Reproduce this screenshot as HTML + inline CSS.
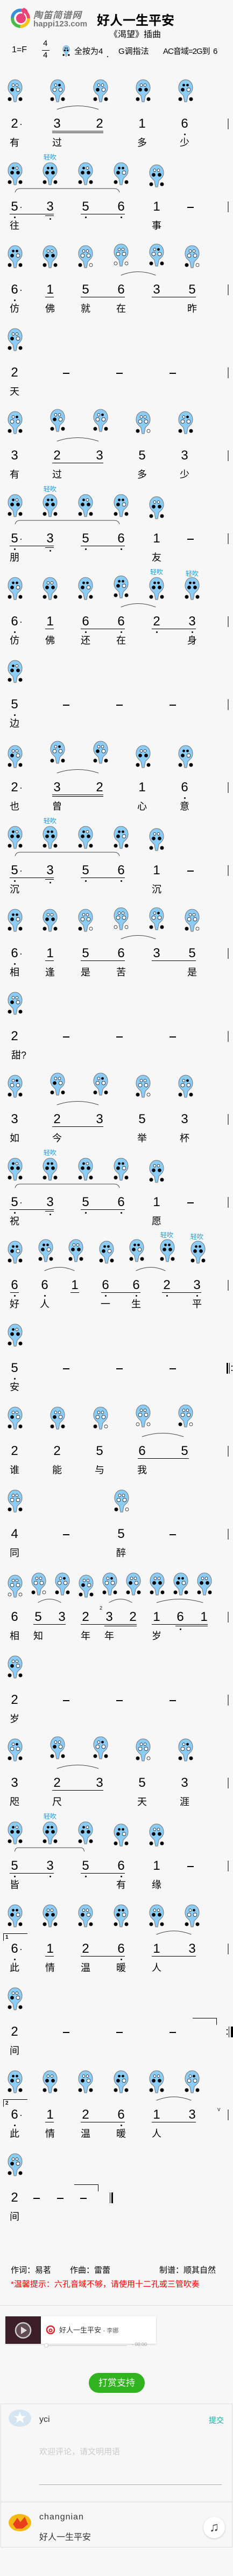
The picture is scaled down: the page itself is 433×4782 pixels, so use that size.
<!DOCTYPE html>
<html><head><meta charset="utf-8">
<style>
*{margin:0;padding:0;box-sizing:border-box}
body{width:433px;height:4782px;background:#f7f7f7;position:relative;overflow:hidden;font-family:"Liberation Sans","Noto Sans CJK SC",sans-serif;color:#000}
.s{position:absolute;left:0;width:433px;height:150px}
.o{position:absolute;top:17px;width:28px;height:43px}
.n{position:absolute;top:86px;width:20px;margin-left:-10px;text-align:center;font-size:24px;line-height:28px}
.l{position:absolute;top:123px;width:24px;margin-left:-12px;text-align:center;font-size:18px;line-height:24px;white-space:nowrap}
.q{position:absolute;top:1px;width:40px;margin-left:-20px;text-align:center;font-size:12px;color:#1e9be0;line-height:14px}
.u,.u2{position:absolute;height:1px;background:#000}
.u{top:113px}.u2{top:116px}
.d{position:absolute;top:118px;width:3px;height:3px;margin-left:-1.5px;border-radius:50%;background:#000}
.d.dd{top:121px}
.a{position:absolute;top:100px;width:2px;height:2px;background:#000;border-radius:50%}
.m{position:absolute;top:100px;width:12px;height:2px;margin-left:-6px;background:#000}
.bar{position:absolute;left:423px;top:90px;width:2px;height:20px;background:#777}
.sl{position:absolute;top:64px;height:10px;overflow:visible}
.sl path{fill:none;stroke:#444;stroke-width:1;vector-effect:non-scaling-stroke}
.abs{position:absolute;white-space:nowrap}
</style></head><body>
<svg width="0" height="0" style="position:absolute">
<defs>
<path id="B" d="M14 1C22 1 27 8 27 16C27 24 21 27 18 31L16 42L12 42L10 31C7 27 1 24 1 16C1 8 6 1 14 1Z" fill="#8ccdf7" stroke="#777" stroke-width="1"/>
<symbol id="m1" viewBox="0 0 28 43"><use href="#B"/><circle cx="10.5" cy="11" r="2.4" fill="#fff" stroke="#000" stroke-width=".7"/><circle cx="17.5" cy="11" r="2.4" fill="#fff" stroke="#000" stroke-width=".7"/><circle cx="8.5" cy="19.5" r="3.4" fill="#000"/><circle cx="19.5" cy="19.5" r="3.4" fill="#000"/><circle cx="4" cy="37" r="3.5" fill="#000"/><circle cx="24" cy="37" r="3.5" fill="#000"/></symbol>
<symbol id="m2" viewBox="0 0 28 43"><use href="#B"/><circle cx="10.5" cy="11" r="2.4" fill="#fff" stroke="#000" stroke-width=".7"/><circle cx="17.5" cy="11" r="2.4" fill="#fff" stroke="#000" stroke-width=".7"/><circle cx="8.5" cy="19.5" r="3.4" fill="#000"/><circle cx="19.5" cy="19.5" r="3.4" fill="#fff" stroke="#000" stroke-width=".7"/><circle cx="4" cy="37" r="3.5" fill="#000"/><circle cx="24" cy="37" r="3.5" fill="#000"/></symbol>
<symbol id="m3" viewBox="0 0 28 43"><use href="#B"/><circle cx="10.5" cy="11" r="2.4" fill="#fff" stroke="#000" stroke-width=".7"/><circle cx="17.5" cy="11" r="2.4" fill="#000"/><circle cx="8.5" cy="19.5" r="3.4" fill="#fff" stroke="#000" stroke-width=".7"/><circle cx="19.5" cy="19.5" r="3.4" fill="#fff" stroke="#000" stroke-width=".7"/><circle cx="4" cy="37" r="3.5" fill="#000"/><circle cx="24" cy="37" r="3.5" fill="#000"/></symbol>
<symbol id="m4" viewBox="0 0 28 43"><use href="#B"/><circle cx="10.5" cy="11" r="2.4" fill="#fff" stroke="#000" stroke-width=".7"/><circle cx="17.5" cy="11" r="2.4" fill="#fff" stroke="#000" stroke-width=".7"/><circle cx="8.5" cy="19.5" r="3.4" fill="#fff" stroke="#000" stroke-width=".7"/><circle cx="19.5" cy="19.5" r="3.4" fill="#fff" stroke="#000" stroke-width=".7"/><circle cx="4" cy="37" r="3.5" fill="#000"/><circle cx="24" cy="37" r="3.5" fill="#000"/></symbol>
<symbol id="m5" viewBox="0 0 28 43"><use href="#B"/><circle cx="10.5" cy="11" r="2.4" fill="#fff" stroke="#000" stroke-width=".7"/><circle cx="17.5" cy="11" r="2.4" fill="#fff" stroke="#000" stroke-width=".7"/><circle cx="8.5" cy="19.5" r="3.4" fill="#fff" stroke="#000" stroke-width=".7"/><circle cx="19.5" cy="19.5" r="3.4" fill="#fff" stroke="#000" stroke-width=".7"/><circle cx="4" cy="37" r="3.5" fill="#000"/><circle cx="24" cy="37" r="3" fill="#fff" stroke="#000" stroke-width=".7"/></symbol>
<symbol id="m6" viewBox="0 0 28 43"><use href="#B"/><circle cx="10.5" cy="11" r="2.4" fill="#fff" stroke="#000" stroke-width=".7"/><circle cx="17.5" cy="11" r="2.4" fill="#fff" stroke="#000" stroke-width=".7"/><circle cx="8.5" cy="19.5" r="3.4" fill="#fff" stroke="#000" stroke-width=".7"/><circle cx="19.5" cy="19.5" r="3.4" fill="#fff" stroke="#000" stroke-width=".7"/><circle cx="4" cy="37" r="3" fill="#fff" stroke="#000" stroke-width=".7"/><circle cx="24" cy="37" r="3" fill="#fff" stroke="#000" stroke-width=".7"/></symbol>
<symbol id="l5" viewBox="0 0 28 43"><use href="#B"/><circle cx="10.5" cy="11" r="2.4" fill="#000"/><circle cx="17.5" cy="11" r="2.4" fill="#fff" stroke="#000" stroke-width=".7"/><circle cx="8.5" cy="19.5" r="3.4" fill="#000"/><circle cx="19.5" cy="19.5" r="3.4" fill="#000"/><circle cx="4" cy="37" r="3.5" fill="#000"/><circle cx="24" cy="37" r="3.5" fill="#000"/></symbol>
<symbol id="l6" viewBox="0 0 28 43"><use href="#B"/><circle cx="10.5" cy="11" r="2.4" fill="#000"/><circle cx="17.5" cy="11" r="2.4" fill="#000"/><circle cx="8.5" cy="19.5" r="3.4" fill="#000"/><circle cx="19.5" cy="19.5" r="3.4" fill="#fff" stroke="#000" stroke-width=".7"/><circle cx="4" cy="37" r="3.5" fill="#000"/><circle cx="24" cy="37" r="3.5" fill="#000"/></symbol>
<symbol id="l3" viewBox="0 0 28 43"><use href="#B"/><circle cx="10.5" cy="11" r="2.4" fill="#000"/><circle cx="17.5" cy="11" r="2.4" fill="#000"/><circle cx="8.5" cy="19.5" r="3.4" fill="#000"/><circle cx="19.5" cy="19.5" r="3.4" fill="#000"/><circle cx="4" cy="37" r="3.5" fill="#000"/><circle cx="24" cy="37" r="3.5" fill="#000"/></symbol>
</defs></svg>

<!-- Header -->
<svg class="abs" style="left:18px;top:12px" width="40" height="40" viewBox="0 0 40 40">
<circle cx="20" cy="22" r="15" fill="none" stroke="#f5c518" stroke-width="6" stroke-dasharray="24 100"/>
<circle cx="20" cy="22" r="15" fill="none" stroke="#4cb848" stroke-width="6" stroke-dasharray="0 24 24 100"/>
<circle cx="20" cy="22" r="15" fill="none" stroke="#3a8fd6" stroke-width="6" stroke-dasharray="0 48 24 100"/>
<circle cx="20" cy="22" r="15" fill="none" stroke="#e94b6b" stroke-width="6" stroke-dasharray="0 72 24 100"/>
<circle cx="21" cy="22" r="9" fill="#e9407a"/>
<path d="M25 4L25 18M25 4Q33 6 32 13" stroke="#e9407a" stroke-width="3" fill="none"/>
</svg>
<div class="abs" style="left:62px;top:14px;font-size:17px;font-style:italic;font-weight:bold;color:#777;letter-spacing:1px">陶笛简谱网</div>
<div class="abs" style="left:62px;top:36px;font-size:15px;font-weight:bold;color:#777">happi123.com</div>
<div class="abs" style="left:180px;top:18px;font-size:24px;font-weight:bold">好人一生平安</div>
<div class="abs" style="left:203px;top:50px;font-size:16px">《渴望》插曲</div>
<div class="abs" style="left:22px;top:84px;font-size:16px">1=F</div>
<div class="abs" style="left:80px;top:73px;font-size:15px;line-height:16px">4</div>
<div class="abs" style="left:78px;top:93px;width:14px;height:1px;background:#000"></div>
<div class="abs" style="left:80px;top:95px;font-size:15px;line-height:16px">4</div>
<svg class="abs" style="left:115px;top:84px" width="16" height="21" viewBox="0 0 28 43"><use href="#l3"/></svg>
<div class="abs" style="left:138px;top:84px;font-size:15px">全按为4</div>
<i class="abs" style="left:199px;top:104px;width:2px;height:2px;background:#000;border-radius:50%"></i>
<div class="abs" style="left:220px;top:84px;font-size:15px">G调指法</div>
<div class="abs" style="left:303px;top:84px;font-size:15px;letter-spacing:-1px">AC音域=2G到&nbsp; 6</div>

<!-- 1 -->
<div class="s" style="top:130px">
<svg class="o" style="left:14px"><use href="#m2"/></svg><svg class="o" style="left:93px"><use href="#m3"/></svg><svg class="o" style="left:173px"><use href="#m2"/></svg><svg class="o" style="left:252px"><use href="#m1"/></svg><svg class="o" style="left:331px"><use href="#l6"/></svg>
<svg class="sl" style="left:105px;width:79px" viewBox="0 0 100 10" preserveAspectRatio="none"><path d="M1 9Q50-4 99 9"/></svg>
<div class="n" style="left:27px">2</div><i class="a" style="left:38px"></i><div class="n" style="left:106px">3</div><div class="n" style="left:185px">2</div><div class="n" style="left:264px">1</div><div class="n" style="left:343px">6</div><i class="d" style="left:343px"></i>
<b class="u" style="left:97px;width:95px"></b><b class="u2" style="left:97px;width:95px"></b>
<div class="l" style="left:27px">有</div><div class="l" style="left:106px">过</div><div class="l" style="left:264px">多</div><div class="l" style="left:343px">少</div>
<b class="bar"></b></div>

<!-- 2 -->
<div class="s" style="top:284px"><div class="q" style="left:93px">轻吹</div>
<svg class="o" style="left:14px"><use href="#l5"/></svg><svg class="o" style="left:79px"><use href="#l3"/></svg><svg class="o" style="left:145px"><use href="#l5"/></svg><svg class="o" style="left:211px"><use href="#l6"/></svg><svg class="o" style="left:277px;top:21px"><use href="#m1"/></svg>
<svg class="sl" style="left:26px;width:198px" viewBox="0 0 100 10" preserveAspectRatio="none"><path d="M1 9Q2 2 6 2L94 2Q98 2 99 9"/></svg>
<div class="n" style="left:27px">5</div><i class="a" style="left:38px"></i><div class="n" style="left:93px">3</div><div class="n" style="left:159px">5</div><div class="n" style="left:225px">6</div><div class="n" style="left:291px">1</div><b class="m" style="left:354px"></b>
<b class="u" style="left:18px;width:82px"></b><b class="u2" style="left:84px;width:16px"></b><b class="u" style="left:150px;width:82px"></b>
<i class="d" style="left:27px"></i><i class="d dd" style="left:93px"></i><i class="d" style="left:159px"></i><i class="d" style="left:225px"></i>
<div class="l" style="left:27px">往</div><div class="l" style="left:291px">事</div>
<b class="bar"></b></div>

<!-- 3 -->
<div class="s" style="top:438px">
<svg class="o" style="left:14px"><use href="#l6"/></svg><svg class="o" style="left:79px"><use href="#m1"/></svg><svg class="o" style="left:145px"><use href="#m5"/></svg><svg class="o" style="left:211px;top:14px"><use href="#m6"/></svg><svg class="o" style="left:277px;top:14px"><use href="#m3"/></svg><svg class="o" style="left:343px"><use href="#m5"/></svg>
<svg class="sl" style="left:224px;width:66px" viewBox="0 0 100 10" preserveAspectRatio="none"><path d="M1 9Q50-4 99 9"/></svg>
<div class="n" style="left:27px">6</div><i class="a" style="left:38px"></i><div class="n" style="left:93px">1</div><div class="n" style="left:159px">5</div><div class="n" style="left:225px">6</div><div class="n" style="left:291px">3</div><div class="n" style="left:357px">5</div>
<b class="u" style="left:84px;width:16px"></b><b class="u" style="left:150px;width:82px"></b><b class="u" style="left:282px;width:82px"></b>
<i class="d" style="left:27px"></i>
<div class="l" style="left:27px">仿</div><div class="l" style="left:93px">佛</div><div class="l" style="left:159px">就</div><div class="l" style="left:225px">在</div><div class="l" style="left:357px">昨</div>
<b class="bar"></b></div>

<!-- 4 -->
<div class="s" style="top:592px">
<svg class="o" style="left:14px"><use href="#m2"/></svg>
<div class="n" style="left:27px">2</div><b class="m" style="left:123px"></b><b class="m" style="left:222px"></b><b class="m" style="left:321px"></b>
<div class="l" style="left:27px">天</div><b class="bar"></b></div>

<!-- 5 -->
<div class="s" style="top:746px">
<svg class="o" style="left:14px"><use href="#m3"/></svg><svg class="o" style="left:93px;top:13px"><use href="#m2"/></svg><svg class="o" style="left:173px;top:13px"><use href="#m3"/></svg><svg class="o" style="left:252px"><use href="#m5"/></svg><svg class="o" style="left:331px"><use href="#m3"/></svg>
<svg class="sl" style="left:105px;width:79px" viewBox="0 0 100 10" preserveAspectRatio="none"><path d="M1 9Q50-4 99 9"/></svg>
<div class="n" style="left:27px">3</div><div class="n" style="left:106px">2</div><div class="n" style="left:185px">3</div><div class="n" style="left:264px">5</div><div class="n" style="left:343px">3</div>
<b class="u" style="left:97px;width:95px"></b>
<div class="l" style="left:27px">有</div><div class="l" style="left:106px">过</div><div class="l" style="left:264px">多</div><div class="l" style="left:343px">少</div>
<b class="bar"></b></div>

<!-- 6 -->
<div class="s" style="top:900px"><div class="q" style="left:93px">轻吹</div>
<svg class="o" style="left:14px"><use href="#l5"/></svg><svg class="o" style="left:79px"><use href="#l3"/></svg><svg class="o" style="left:145px"><use href="#l5"/></svg><svg class="o" style="left:211px"><use href="#l6"/></svg><svg class="o" style="left:277px;top:21px"><use href="#m1"/></svg>
<svg class="sl" style="left:26px;width:198px" viewBox="0 0 100 10" preserveAspectRatio="none"><path d="M1 9Q2 2 6 2L94 2Q98 2 99 9"/></svg>
<div class="n" style="left:27px">5</div><i class="a" style="left:38px"></i><div class="n" style="left:93px">3</div><div class="n" style="left:159px">5</div><div class="n" style="left:225px">6</div><div class="n" style="left:291px">1</div><b class="m" style="left:354px"></b>
<b class="u" style="left:18px;width:82px"></b><b class="u2" style="left:84px;width:16px"></b><b class="u" style="left:150px;width:82px"></b>
<i class="d" style="left:27px"></i><i class="d dd" style="left:93px"></i><i class="d" style="left:159px"></i><i class="d" style="left:225px"></i>
<div class="l" style="left:27px">朋</div><div class="l" style="left:291px">友</div>
<b class="bar"></b></div>

<!-- 7 -->
<div class="s" style="top:1054px"><div class="q" style="left:291px">轻吹</div><div class="q" style="left:357px;top:4px">轻吹</div>
<svg class="o" style="left:14px"><use href="#l6"/></svg><svg class="o" style="left:79px"><use href="#m1"/></svg><svg class="o" style="left:145px"><use href="#l6"/></svg><svg class="o" style="left:211px;top:14px"><use href="#l6"/></svg><svg class="o" style="left:277px"><use href="#l3"/></svg><svg class="o" style="left:343px"><use href="#l3"/></svg>
<svg class="sl" style="left:224px;width:66px" viewBox="0 0 100 10" preserveAspectRatio="none"><path d="M1 9Q50-4 99 9"/></svg>
<div class="n" style="left:27px">6</div><i class="a" style="left:38px"></i><div class="n" style="left:93px">1</div><div class="n" style="left:159px">6</div><div class="n" style="left:225px">6</div><div class="n" style="left:291px">2</div><div class="n" style="left:357px">3</div>
<b class="u" style="left:84px;width:16px"></b><b class="u" style="left:150px;width:82px"></b><b class="u" style="left:282px;width:82px"></b>
<i class="d" style="left:27px"></i><i class="d" style="left:159px"></i><i class="d" style="left:225px"></i><i class="d" style="left:291px"></i><i class="d" style="left:357px"></i>
<div class="l" style="left:27px">仿</div><div class="l" style="left:93px">佛</div><div class="l" style="left:159px">还</div><div class="l" style="left:225px">在</div><div class="l" style="left:357px">身</div>
<b class="bar"></b></div>

<!-- 8 -->
<div class="s" style="top:1208px">
<svg class="o" style="left:14px"><use href="#l5"/></svg>
<div class="n" style="left:27px">5</div><i class="d" style="left:27px"></i><b class="m" style="left:123px"></b><b class="m" style="left:222px"></b><b class="m" style="left:321px"></b>
<div class="l" style="left:27px">边</div><b class="bar"></b></div>

<!-- 9 -->
<div class="s" style="top:1362px">
<svg class="o" style="left:14px;top:21px"><use href="#m2"/></svg><svg class="o" style="left:93px;top:13px"><use href="#m3"/></svg><svg class="o" style="left:173px;top:13px"><use href="#m2"/></svg><svg class="o" style="left:252px;top:21px"><use href="#m1"/></svg><svg class="o" style="left:331px;top:21px"><use href="#l6"/></svg>
<svg class="sl" style="left:105px;width:79px" viewBox="0 0 100 10" preserveAspectRatio="none"><path d="M1 9Q50-4 99 9"/></svg>
<div class="n" style="left:27px">2</div><i class="a" style="left:38px"></i><div class="n" style="left:106px">3</div><div class="n" style="left:185px">2</div><div class="n" style="left:264px">1</div><div class="n" style="left:343px">6</div><i class="d" style="left:343px"></i>
<b class="u" style="left:97px;width:95px"></b><b class="u2" style="left:97px;width:95px"></b>
<div class="l" style="left:27px">也</div><div class="l" style="left:106px">曾</div><div class="l" style="left:264px">心</div><div class="l" style="left:343px">意</div>
<b class="bar"></b></div>

<!-- 10 -->
<div class="s" style="top:1516px"><div class="q" style="left:93px">轻吹</div>
<svg class="o" style="left:14px"><use href="#l5"/></svg><svg class="o" style="left:79px"><use href="#l3"/></svg><svg class="o" style="left:145px"><use href="#l5"/></svg><svg class="o" style="left:211px"><use href="#l6"/></svg><svg class="o" style="left:277px;top:21px"><use href="#m1"/></svg>
<svg class="sl" style="left:26px;width:198px" viewBox="0 0 100 10" preserveAspectRatio="none"><path d="M1 9Q2 2 6 2L94 2Q98 2 99 9"/></svg>
<div class="n" style="left:27px">5</div><i class="a" style="left:38px"></i><div class="n" style="left:93px">3</div><div class="n" style="left:159px">5</div><div class="n" style="left:225px">6</div><div class="n" style="left:291px">1</div><b class="m" style="left:354px"></b>
<b class="u" style="left:18px;width:82px"></b><b class="u2" style="left:84px;width:16px"></b><b class="u" style="left:150px;width:82px"></b>
<i class="d" style="left:27px"></i><i class="d dd" style="left:93px"></i><i class="d" style="left:159px"></i><i class="d" style="left:225px"></i>
<div class="l" style="left:27px">沉</div><div class="l" style="left:291px">沉</div>
<b class="bar"></b></div>

<!-- 11 -->
<div class="s" style="top:1670px">
<svg class="o" style="left:14px"><use href="#l6"/></svg><svg class="o" style="left:79px"><use href="#m1"/></svg><svg class="o" style="left:145px"><use href="#m5"/></svg><svg class="o" style="left:211px;top:14px"><use href="#m6"/></svg><svg class="o" style="left:277px;top:14px"><use href="#m3"/></svg><svg class="o" style="left:343px"><use href="#m5"/></svg>
<svg class="sl" style="left:224px;width:66px" viewBox="0 0 100 10" preserveAspectRatio="none"><path d="M1 9Q50-4 99 9"/></svg>
<div class="n" style="left:27px">6</div><i class="a" style="left:38px"></i><div class="n" style="left:93px">1</div><div class="n" style="left:159px">5</div><div class="n" style="left:225px">6</div><div class="n" style="left:291px">3</div><div class="n" style="left:357px">5</div>
<b class="u" style="left:84px;width:16px"></b><b class="u" style="left:150px;width:82px"></b><b class="u" style="left:282px;width:82px"></b>
<i class="d" style="left:27px"></i>
<div class="l" style="left:27px">相</div><div class="l" style="left:93px">逢</div><div class="l" style="left:159px">是</div><div class="l" style="left:225px">苦</div><div class="l" style="left:357px">是</div>
<b class="bar"></b></div>

<!-- 12 -->
<div class="s" style="top:1824px">
<svg class="o" style="left:14px"><use href="#m2"/></svg>
<div class="n" style="left:27px">2</div><b class="m" style="left:123px"></b><b class="m" style="left:222px"></b><b class="m" style="left:321px"></b>
<div class="l" style="left:35px;width:40px;margin-left:-20px">甜?</div><b class="bar"></b></div>

<!-- 13 -->
<div class="s" style="top:1978px">
<svg class="o" style="left:14px"><use href="#m3"/></svg><svg class="o" style="left:93px;top:13px"><use href="#m2"/></svg><svg class="o" style="left:173px;top:13px"><use href="#m3"/></svg><svg class="o" style="left:252px"><use href="#m5"/></svg><svg class="o" style="left:331px"><use href="#m3"/></svg>
<svg class="sl" style="left:105px;width:79px" viewBox="0 0 100 10" preserveAspectRatio="none"><path d="M1 9Q50-4 99 9"/></svg>
<div class="n" style="left:27px">3</div><div class="n" style="left:106px">2</div><div class="n" style="left:185px">3</div><div class="n" style="left:264px">5</div><div class="n" style="left:343px">3</div>
<b class="u" style="left:97px;width:95px"></b>
<div class="l" style="left:27px">如</div><div class="l" style="left:106px">今</div><div class="l" style="left:264px">举</div><div class="l" style="left:343px">杯</div>
<b class="bar"></b></div>

<!-- 14 -->
<div class="s" style="top:2132px"><div class="q" style="left:93px">轻吹</div>
<svg class="o" style="left:14px"><use href="#l5"/></svg><svg class="o" style="left:79px"><use href="#l3"/></svg><svg class="o" style="left:145px"><use href="#l5"/></svg><svg class="o" style="left:211px"><use href="#l6"/></svg><svg class="o" style="left:277px;top:21px"><use href="#m1"/></svg>
<svg class="sl" style="left:26px;width:198px" viewBox="0 0 100 10" preserveAspectRatio="none"><path d="M1 9Q2 2 6 2L94 2Q98 2 99 9"/></svg>
<div class="n" style="left:27px">5</div><i class="a" style="left:38px"></i><div class="n" style="left:93px">3</div><div class="n" style="left:159px">5</div><div class="n" style="left:225px">6</div><div class="n" style="left:291px">1</div><b class="m" style="left:354px"></b>
<b class="u" style="left:18px;width:82px"></b><b class="u2" style="left:84px;width:16px"></b><b class="u" style="left:150px;width:82px"></b>
<i class="d" style="left:27px"></i><i class="d dd" style="left:93px"></i><i class="d" style="left:159px"></i><i class="d" style="left:225px"></i>
<div class="l" style="left:27px">祝</div><div class="l" style="left:291px">愿</div>
<b class="bar"></b></div>

<!-- 15 -->
<div class="s" style="top:2286px"><div class="q" style="left:310px;top:0">轻吹</div><div class="q" style="left:366px;top:3px">轻吹</div>
<svg class="o" style="left:14px"><use href="#l6"/></svg><svg class="o" style="left:71px;top:14px"><use href="#l6"/></svg><svg class="o" style="left:127px;top:14px"><use href="#m1"/></svg><svg class="o" style="left:184px"><use href="#l6"/></svg><svg class="o" style="left:240px;top:14px"><use href="#l6"/></svg><svg class="o" style="left:297px;top:14px"><use href="#l3"/></svg><svg class="o" style="left:354px"><use href="#l3"/></svg>
<svg class="sl" style="left:82px;width:57px" viewBox="0 0 100 10" preserveAspectRatio="none"><path d="M1 9Q50-4 99 9"/></svg><svg class="sl" style="left:252px;width:56px" viewBox="0 0 100 10" preserveAspectRatio="none"><path d="M1 9Q50-4 99 9"/></svg>
<div class="n" style="left:27px">6</div><div class="n" style="left:83px">6</div><div class="n" style="left:139px">1</div><div class="n" style="left:196px">6</div><div class="n" style="left:253px">6</div><div class="n" style="left:310px">2</div><div class="n" style="left:366px">3</div>
<b class="u" style="left:19px;width:16px"></b><b class="u" style="left:131px;width:16px"></b><b class="u" style="left:188px;width:73px"></b><b class="u" style="left:301px;width:73px"></b>
<i class="d" style="left:27px"></i><i class="d" style="left:83px"></i><i class="d" style="left:196px"></i><i class="d" style="left:253px"></i><i class="d" style="left:310px"></i><i class="d" style="left:366px"></i>
<div class="l" style="left:27px">好</div><div class="l" style="left:83px">人</div><div class="l" style="left:196px">一</div><div class="l" style="left:253px">生</div><div class="l" style="left:366px">平</div>
<b class="bar"></b></div>

<!-- 16 -->
<div class="s" style="top:2440px">
<svg class="o" style="left:14px"><use href="#l5"/></svg>
<div class="n" style="left:27px">5</div><i class="d" style="left:27px"></i><b class="m" style="left:123px"></b><b class="m" style="left:222px"></b><b class="m" style="left:321px"></b>
<div class="l" style="left:27px">安</div>
<b style="position:absolute;left:421px;top:90px;width:3px;height:20px;background:#000"></b><b style="position:absolute;left:426px;top:90px;width:1px;height:20px;background:#000"></b><i style="position:absolute;left:430px;top:95px;width:2px;height:2px;background:#000"></i><i style="position:absolute;left:430px;top:103px;width:2px;height:2px;background:#000"></i>
</div>

<!-- 17 -->
<div class="s" style="top:2594px">
<svg class="o" style="left:14px"><use href="#m2"/></svg><svg class="o" style="left:93px"><use href="#m2"/></svg><svg class="o" style="left:173px"><use href="#m5"/></svg><svg class="o" style="left:252px;top:13px"><use href="#m6"/></svg><svg class="o" style="left:331px;top:13px"><use href="#m5"/></svg>
<svg class="sl" style="left:263px;width:79px" viewBox="0 0 100 10" preserveAspectRatio="none"><path d="M1 9Q50-4 99 9"/></svg>
<div class="n" style="left:27px">2</div><div class="n" style="left:106px">2</div><div class="n" style="left:185px">5</div><div class="n" style="left:264px">6</div><div class="n" style="left:343px">5</div>
<b class="u" style="left:256px;width:95px"></b>
<div class="l" style="left:27px">谁</div><div class="l" style="left:106px">能</div><div class="l" style="left:185px">与</div><div class="l" style="left:264px">我</div>
<b class="bar"></b></div>

<!-- 18 -->
<div class="s" style="top:2748px">
<svg class="o" style="left:14px"><use href="#m4"/></svg><svg class="o" style="left:212px"><use href="#m5"/></svg>
<div class="n" style="left:27px">4</div><b class="m" style="left:123px"></b><div class="n" style="left:225px">5</div><b class="m" style="left:321px"></b>
<div class="l" style="left:27px">同</div><div class="l" style="left:225px">醉</div>
<b class="bar"></b></div>

<!-- 19 -->
<div class="s" style="top:2902px">
<svg class="o" style="left:14px;top:21px"><use href="#m6"/></svg><svg class="o" style="left:58px;top:17px"><use href="#m5"/></svg><svg class="o" style="left:102px;top:17px"><use href="#m3"/></svg><svg class="o" style="left:146px;top:21px"><use href="#m2"/></svg><svg class="o" style="left:190px;top:17px"><use href="#m3"/></svg><svg class="o" style="left:234px;top:17px"><use href="#m2"/></svg><svg class="o" style="left:278px;top:17px"><use href="#m1"/></svg><svg class="o" style="left:322px;top:17px"><use href="#l6"/></svg><svg class="o" style="left:366px;top:17px"><use href="#m1"/></svg>
<svg class="sl" style="left:70px;width:44px" viewBox="0 0 100 10" preserveAspectRatio="none"><path d="M1 9Q50-4 99 9"/></svg><svg class="sl" style="left:202px;width:44px" viewBox="0 0 100 10" preserveAspectRatio="none"><path d="M1 9Q50-4 99 9"/></svg><svg class="sl" style="left:290px;width:88px" viewBox="0 0 100 10" preserveAspectRatio="none"><path d="M1 9Q50-4 99 9"/></svg>
<div style="position:absolute;left:185px;top:78px;font-size:9px">2</div>
<div class="n" style="left:27px">6</div><div class="n" style="left:71px">5</div><div class="n" style="left:115px">3</div><div class="n" style="left:159px">2</div><div class="n" style="left:203px">3</div><div class="n" style="left:247px">2</div><div class="n" style="left:291px">1</div><div class="n" style="left:335px">6</div><div class="n" style="left:379px">1</div>
<b class="u" style="left:62px;width:60px"></b><b class="u" style="left:150px;width:104px"></b><b class="u2" style="left:194px;width:60px"></b><b class="u" style="left:282px;width:104px"></b><b class="u2" style="left:326px;width:60px"></b>
<i class="d dd" style="left:335px"></i>
<div class="l" style="left:27px">相</div><div class="l" style="left:71px">知</div><div class="l" style="left:159px">年</div><div class="l" style="left:203px">年</div><div class="l" style="left:291px">岁</div>
<b class="bar"></b></div>

<!-- 20 -->
<div class="s" style="top:3056px">
<svg class="o" style="left:14px"><use href="#m2"/></svg>
<div class="n" style="left:27px">2</div><b class="m" style="left:123px"></b><b class="m" style="left:222px"></b><b class="m" style="left:321px"></b>
<div class="l" style="left:27px">岁</div><b class="bar"></b></div>

<!-- 21 -->
<div class="s" style="top:3210px">
<svg class="o" style="left:14px"><use href="#m3"/></svg><svg class="o" style="left:93px;top:13px"><use href="#m2"/></svg><svg class="o" style="left:173px;top:13px"><use href="#m3"/></svg><svg class="o" style="left:252px"><use href="#m5"/></svg><svg class="o" style="left:331px"><use href="#m3"/></svg>
<svg class="sl" style="left:105px;width:79px" viewBox="0 0 100 10" preserveAspectRatio="none"><path d="M1 9Q50-4 99 9"/></svg>
<div class="n" style="left:27px">3</div><div class="n" style="left:106px">2</div><div class="n" style="left:185px">3</div><div class="n" style="left:264px">5</div><div class="n" style="left:343px">3</div>
<b class="u" style="left:97px;width:95px"></b>
<div class="l" style="left:27px">咫</div><div class="l" style="left:106px">尺</div><div class="l" style="left:264px">天</div><div class="l" style="left:343px">涯</div>
<b class="bar"></b></div>

<!-- 22 -->
<div class="s" style="top:3364px"><div class="q" style="left:93px">轻吹</div>
<svg class="o" style="left:14px"><use href="#l5"/></svg><svg class="o" style="left:79px"><use href="#l3"/></svg><svg class="o" style="left:145px"><use href="#l5"/></svg><svg class="o" style="left:211px;top:21px"><use href="#l6"/></svg><svg class="o" style="left:277px;top:21px"><use href="#m1"/></svg>
<svg class="sl" style="left:26px;width:132px" viewBox="0 0 100 10" preserveAspectRatio="none"><path d="M1 9Q2 2 6 2L94 2Q98 2 99 9"/></svg>
<div class="n" style="left:27px">5</div><div class="n" style="left:93px">3</div><div class="n" style="left:159px">5</div><div class="n" style="left:225px">6</div><div class="n" style="left:291px">1</div><b class="m" style="left:354px"></b>
<b class="u" style="left:18px;width:82px"></b><b class="u" style="left:150px;width:82px"></b>
<i class="d" style="left:27px"></i><i class="d" style="left:93px"></i><i class="d" style="left:159px"></i><i class="d" style="left:225px"></i>
<div class="l" style="left:27px">皆</div><div class="l" style="left:225px">有</div><div class="l" style="left:291px">缘</div>
<b class="bar"></b></div>

<!-- 23 -->
<div class="s" style="top:3518px">
<svg class="o" style="left:14px"><use href="#l6"/></svg><svg class="o" style="left:79px"><use href="#m1"/></svg><svg class="o" style="left:145px"><use href="#m2"/></svg><svg class="o" style="left:211px"><use href="#l6"/></svg><svg class="o" style="left:277px"><use href="#m1"/></svg><svg class="o" style="left:343px"><use href="#m3"/></svg>
<b style="position:absolute;left:6px;top:71px;width:45px;height:1px;background:#000"></b><b style="position:absolute;left:6px;top:71px;width:1px;height:14px;background:#000"></b><div style="position:absolute;left:10px;top:73px;font-size:10px;font-weight:bold">1</div>
<svg class="sl" style="left:290px;width:66px" viewBox="0 0 100 10" preserveAspectRatio="none"><path d="M1 9Q50-4 99 9"/></svg>
<div class="n" style="left:27px">6</div><i class="a" style="left:38px"></i><div class="n" style="left:93px">1</div><div class="n" style="left:159px">2</div><div class="n" style="left:225px">6</div><div class="n" style="left:291px">1</div><div class="n" style="left:357px">3</div>
<b class="u" style="left:84px;width:16px"></b><b class="u" style="left:150px;width:82px"></b><b class="u" style="left:282px;width:82px"></b>
<i class="d" style="left:27px"></i><i class="d" style="left:225px"></i>
<div class="l" style="left:27px">此</div><div class="l" style="left:93px">情</div><div class="l" style="left:159px">温</div><div class="l" style="left:225px">暖</div><div class="l" style="left:291px">人</div>
<b class="bar"></b></div>

<!-- 24 -->
<div class="s" style="top:3672px">
<svg class="o" style="left:14px"><use href="#m2"/></svg>
<div class="n" style="left:27px">2</div><b class="m" style="left:123px"></b><b class="m" style="left:222px"></b><b class="m" style="left:321px"></b>
<b style="position:absolute;left:358px;top:74px;width:45px;height:1px;background:#000"></b><b style="position:absolute;left:402px;top:74px;width:1px;height:13px;background:#000"></b>
<i style="position:absolute;left:421px;top:95px;width:2px;height:2px;background:#000"></i><i style="position:absolute;left:421px;top:103px;width:2px;height:2px;background:#000"></i><b style="position:absolute;left:425px;top:90px;width:1px;height:20px;background:#000"></b><b style="position:absolute;left:429px;top:90px;width:4px;height:20px;background:#000"></b>
<div class="l" style="left:27px">间</div></div>

<!-- 25 -->
<div class="s" style="top:3826px">
<svg class="o" style="left:14px"><use href="#l6"/></svg><svg class="o" style="left:79px"><use href="#m1"/></svg><svg class="o" style="left:145px"><use href="#m2"/></svg><svg class="o" style="left:211px"><use href="#l6"/></svg><svg class="o" style="left:277px"><use href="#m1"/></svg><svg class="o" style="left:343px"><use href="#m3"/></svg>
<b style="position:absolute;left:6px;top:71px;width:45px;height:1px;background:#000"></b><b style="position:absolute;left:6px;top:71px;width:1px;height:14px;background:#000"></b><div style="position:absolute;left:10px;top:73px;font-size:10px;font-weight:bold">2</div>
<svg class="sl" style="left:290px;width:66px" viewBox="0 0 100 10" preserveAspectRatio="none"><path d="M1 9Q50-4 99 9"/></svg>
<div class="n" style="left:27px">6</div><i class="a" style="left:38px"></i><div class="n" style="left:93px">1</div><div class="n" style="left:159px">2</div><div class="n" style="left:225px">6</div><div class="n" style="left:291px">1</div><div class="n" style="left:357px">3</div>
<div style="position:absolute;left:404px;top:84px;font-size:11px;color:#333">v</div>
<b class="u" style="left:84px;width:16px"></b><b class="u" style="left:150px;width:82px"></b><b class="u" style="left:282px;width:82px"></b>
<i class="d" style="left:27px"></i><i class="d" style="left:225px"></i>
<div class="l" style="left:27px">此</div><div class="l" style="left:93px">情</div><div class="l" style="left:159px">温</div><div class="l" style="left:225px">暖</div><div class="l" style="left:291px">人</div>
<b class="bar"></b></div>

<!-- 26 -->
<div class="s" style="top:3980px">
<svg class="o" style="left:14px"><use href="#m2"/></svg>
<div class="n" style="left:27px">2</div><b class="m" style="left:68px"></b><b class="m" style="left:112px"></b><b class="m" style="left:155px"></b>
<b style="position:absolute;left:138px;top:75px;width:45px;height:1px;background:#000"></b><b style="position:absolute;left:182px;top:75px;width:1px;height:13px;background:#000"></b>
<b style="position:absolute;left:204px;top:90px;width:1px;height:20px;background:#000"></b><b style="position:absolute;left:207px;top:90px;width:3px;height:20px;background:#000"></b>
<div class="l" style="left:27px">间</div></div>

<!-- Footer -->
<div class="abs" style="left:20px;top:4203px;font-size:15px">作词：易茗</div>
<div class="abs" style="left:130px;top:4203px;font-size:15px">作曲：雷蕾</div>
<div class="abs" style="left:296px;top:4203px;font-size:15px">制谱：顺其自然</div>
<div class="abs" style="left:20px;top:4229px;font-size:15px;color:#f00">*温馨提示：六孔音域不够，请使用十二孔或三管吹奏</div>
<div class="abs" style="left:0;top:4279px;width:433px;height:1px;background:#ddd"></div>

<div class="abs" style="left:10px;top:4300px;width:280px;height:51px;background:#fff;box-shadow:0 1px 3px rgba(0,0,0,.15)"></div>
<div class="abs" style="left:10px;top:4300px;width:66px;height:51px;background:#3b1e28"></div>
<svg class="abs" style="left:26px;top:4309px" width="34" height="34" viewBox="0 0 34 34"><circle cx="17" cy="17" r="14" fill="rgba(255,255,255,.2)" stroke="#ccc" stroke-width="2.5"/><path d="M13 10L24 17L13 24Z" fill="#ddd"/></svg>
<svg class="abs" style="left:85px;top:4316px" width="18" height="18" viewBox="0 0 18 18"><circle cx="9" cy="9" r="7" fill="none" stroke="#e0252b" stroke-width="2.5"/><circle cx="9" cy="10" r="2.5" fill="none" stroke="#e0252b" stroke-width="2"/></svg>
<div class="abs" style="left:110px;top:4315px;font-size:13px;color:#333">好人一生平安 <span style="font-size:11px;color:#666">- 李娜</span></div>
<div class="abs" style="left:85px;top:4354px;width:151px;height:1px;background:#ccc"></div>
<div class="abs" style="left:82px;top:4350px;width:8px;height:8px;border-radius:50%;border:1px solid #ccc;background:#fff"></div>
<div class="abs" style="left:245px;top:4347px;font-size:9px;color:#999">- 00:00</div>

<div class="abs" style="left:165px;top:4405px;width:104px;height:37px;border-radius:19px;background:#31b21f;color:#fff;font-size:17px;text-align:center;line-height:37px">打赏支持</div>

<div class="abs" style="left:1px;top:4462px;width:431px;height:267px;border:1px solid #ddd;background:#f7f7f7"></div>
<div class="abs" style="left:1px;top:4644px;width:431px;height:1px;background:#ddd"></div>
<svg class="abs" style="left:16px;top:4473px" width="42" height="42" viewBox="0 0 42 42"><ellipse cx="21" cy="16" rx="21" ry="16" fill="#d6e5f2"/><path d="M21 4L24 12L32 12L26 17L28 25L21 20L14 25L16 17L10 12L18 12Z" fill="#fff"/></svg>
<div class="abs" style="left:73px;top:4483px;font-size:16px;color:#333">yci</div>
<div class="abs" style="left:388px;top:4483px;font-size:14px;color:#2aa6a6">提交</div>
<div class="abs" style="left:73px;top:4540px;font-size:15px;color:#ccc">欢迎评论，请文明用语</div>
<div class="abs" style="left:73px;top:4612px;width:339px;height:1px;background:#aaa"></div>
<svg class="abs" style="left:16px;top:4666px" width="42" height="34" viewBox="0 0 42 34"><ellipse cx="21" cy="17" rx="21" ry="16" fill="#f5b814"/><path d="M8 20L16 8L22 16L30 6L36 20L26 28L14 28Z" fill="#e8401c"/></svg>
<div class="abs" style="left:73px;top:4664px;font-size:16px;color:#333;letter-spacing:1px">changnian</div>
<div class="abs" style="left:73px;top:4696px;font-size:16px;color:#333">好人一生平安</div>
<div class="abs" style="left:378px;top:4672px;width:40px;height:40px;border-radius:50%;background:#fff;box-shadow:0 1px 3px rgba(0,0,0,.2);text-align:center;line-height:40px;font-size:24px;color:#444">♫</div>
</body></html>
